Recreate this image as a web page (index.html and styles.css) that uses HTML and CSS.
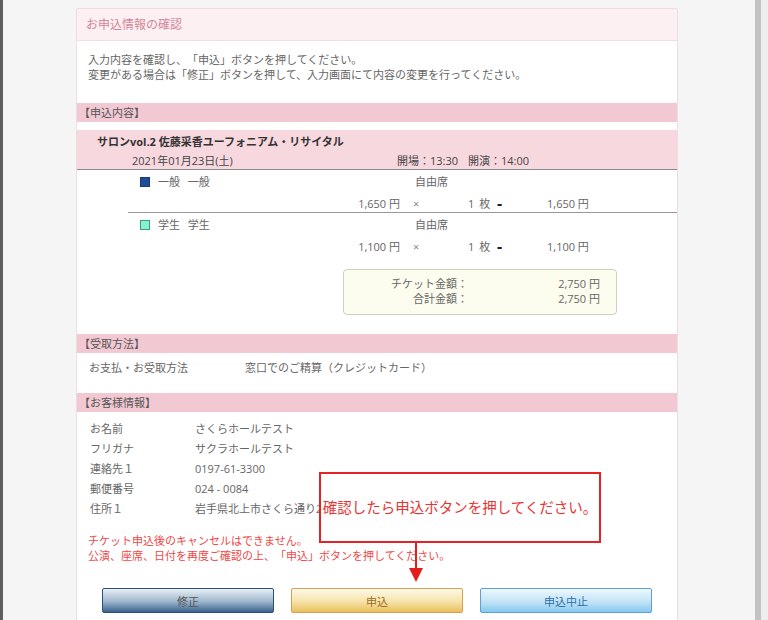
FILE: index.html
```html
<!DOCTYPE html>
<html lang="ja">
<head>
    <meta charset="UTF-8">
    <meta name="viewport" content="width=device-width, initial-scale=1.0">
    <title>お申込情報の確認</title>
    <link rel="stylesheet" href="styles.css">
</head>
<body>

<div class="screen">
    <div class="edge"></div>

    <div class="page">
        <div class="panel">
            <div class="panel-head">お申込情報の確認</div>

            <div class="intro">
                <p>入力内容を確認し、「申込」ボタンを押してください。</p>
                <p>変更がある場合は「修正」ボタンを押して、入力画面にて内容の変更を行ってください。</p>
            </div>

            <!-- 申込内容 -->
            <div class="sec-title">【申込内容】</div>
            <div class="event">
                <div class="event-name">サロンvol.2 佐藤采香ユーフォニアム・リサイタル</div>
                <div class="event-date">
                    <span class="date">2021年01月23日(土)</span>
                    <span class="open">開場：13:30</span>
                    <span>開演：14:00</span>
                </div>
            </div>

            <div class="tickets">
                <div class="ticket">
                    <div class="ticket-type">
                        <span class="type-name"><span class="swatch swatch-blue"></span>一般 一般</span>
                        <span>自由席</span>
                    </div>
                    <div class="ticket-price">
                        <span class="unit">1,650 円</span>
                        <span class="times">×</span>
                        <span class="qty">1 枚</span>
                        <span class="eq">-</span>
                        <span>1,650 円</span>
                    </div>
                </div>
                <div class="ticket">
                    <div class="ticket-type">
                        <span class="type-name"><span class="swatch swatch-green"></span>学生 学生</span>
                        <span>自由席</span>
                    </div>
                    <div class="ticket-price">
                        <span class="unit">1,100 円</span>
                        <span class="times">×</span>
                        <span class="qty">1 枚</span>
                        <span class="eq">-</span>
                        <span>1,100 円</span>
                    </div>
                </div>
            </div>

            <div class="totals">
                <span class="total-label">チケット金額：</span><span class="total-value">2,750 円</span>
                <span class="total-label">合計金額：</span><span class="total-value">2,750 円</span>
            </div>

            <!-- 受取方法 -->
            <div class="sec-title sec-pay">【受取方法】</div>
            <div class="pay-row">
                <span class="pay-label">お支払・お受取方法</span>
                <span>窓口でのご精算（クレジットカード）</span>
            </div>

            <!-- お客様情報 -->
            <div class="sec-title">【お客様情報】</div>
            <dl class="customer">
                <dt>お名前</dt><dd>さくらホールテスト</dd>
                <dt>フリガナ</dt><dd>サクラホールテスト</dd>
                <dt>連絡先１</dt><dd>0197-61-3300</dd>
                <dt>郵便番号</dt><dd>024 - 0084</dd>
                <dt>住所１</dt><dd>岩手県北上市さくら通り2-1</dd>
            </dl>

            <div class="notice">
                <p>チケット申込後のキャンセルはできません。</p>
                <p>公演、座席、日付を再度ご確認の上、「申込」ボタンを押してください。</p>
            </div>

            <div class="buttons">
                <button class="btn btn-back">修正</button>
                <button class="btn btn-apply">申込</button>
                <button class="btn btn-cancel">申込中止</button>
            </div>

            <!-- annotation over the page -->
            <div class="callout">確認したら申込ボタンを押してください。</div>
            <svg class="callout-arrow" width="14" height="39" viewBox="0 0 14 39">
                <line x1="7" y1="0" x2="7" y2="26" stroke="#e41d1d" stroke-width="2"/>
                <polygon points="0,25 14,25 7,39" fill="#e41d1d"/>
            </svg>
        </div>
    </div>

    <div class="scrollbar"></div>
</div>

</body>
</html>
```

FILE: styles.css
```css
html, body {
    margin: 0;
    padding: 0;
}
body {
    font-family: "Open Sans", "Noto Sans CJK JP", sans-serif;
    font-size: 11px;
    color: #666;
    background: #f5f5f5;
    overflow: hidden;
    text-spacing-trim: space-all;
}
p {
    margin: 0;
}
.screen {
    display: flex;
    height: 620px;
}
.edge {
    width: 3px;
    background: #5e5e5e;
}
.page {
    flex: 1;
    padding: 8px 0 0 73px;
}
.scrollbar {
    width: 6px;
    background: #c2c2c2;
    border-right: 7px solid #eeeeee;
}
.panel {
    position: relative;
    width: 600px;
    height: 640px;
    background: #fff;
    border: 1px solid #f1dbe0;
    border-radius: 2px;
}
.panel-head {
    height: 31px;
    line-height: 31px;
    padding-left: 9px;
    font-size: 12px;
    color: #d4879a;
    background: #fcf0f2;
    border-bottom: 1px solid #f2dde1;
}
.intro {
    padding: 11px 11px 21px;
    line-height: 15px;
}
.sec-title {
    height: 19px;
    line-height: 19px;
    padding-left: 2px;
    color: #555;
    background: #f2c9d3;
}
.event {
    margin-top: 8px;
    padding-top: 4px;
    height: 35px;
    background: #f8d8df;
    border-bottom: 1px solid #8a8a8a;
    color: #444;
}
.event-name {
    padding-left: 20px;
    line-height: 16px;
    font-weight: bold;
    color: #333;
}
.event-date {
    display: flex;
    margin-top: 3px;
    padding-left: 55px;
    line-height: 16px;
}
.event-date .date {
    width: 265px;
}
.event-date .open {
    width: 71px;
}
.tickets {
    margin-left: 51px;
}
.ticket + .ticket {
    border-top: 1px solid #9a9a9a;
}
.ticket-type {
    display: grid;
    grid-template-columns: 287px 1fr;
    padding-top: 2px;
    line-height: 20px;
}
.type-name {
    display: flex;
    align-items: center;
    gap: 8px;
    padding-left: 12px;
    word-spacing: 5px;
}
.swatch {
    width: 8px;
    height: 8px;
    border: 1px solid #555;
}
.swatch-blue {
    background: #1f4b98;
    border-color: #1a3a70;
}
.swatch-green {
    background: #86f2cc;
    border-color: #3f9c7e;
}
.ticket-price {
    display: grid;
    grid-template-columns: 272px 68px 29px 50px 1fr;
    margin-top: 3px;
    line-height: 17px;
}
.ticket-price .unit {
    text-align: right;
}
.ticket-price .qty {
    word-spacing: 2px;
}
.ticket-price .times {
    padding-left: 13px;
    color: #888;
}
.ticket-price .eq {
    font-size: 16px;
    font-weight: bold;
    color: #222;
}
.totals {
    display: grid;
    grid-template-columns: 124px 1fr;
    width: 256px;
    margin: 14px 0 0 266px;
    padding: 6px 16px 8px 0;
    line-height: 15px;
    background: #fdfdef;
    border: 1px solid #cfcfc4;
    border-radius: 4px;
}
.total-label {
    text-align: right;
}
.total-value {
    text-align: right;
}
.sec-pay {
    margin-top: 19px;
}
.pay-row {
    display: flex;
    padding: 5px 0 15px 12px;
    line-height: 20px;
}
.pay-label {
    width: 156px;
}
.customer {
    display: grid;
    grid-template-columns: 105px 1fr;
    margin: 0;
    padding: 7px 0 0 13px;
    line-height: 20px;
}
.customer dd {
    margin: 0;
}
.notice {
    margin-top: 14px;
    padding-left: 11px;
    line-height: 15px;
    color: #ef4848;
}
.buttons {
    display: flex;
    justify-content: center;
    gap: 17px;
    margin-top: 25px;
}
.btn {
    width: 172px;
    height: 25px;
    padding: 0;
    font-family: inherit;
    font-size: 11px;
    border-radius: 2px;
    cursor: pointer;
}
.btn-back {
    color: #555;
    background: linear-gradient(#e8eff6, #9db5cc 55%, #3a6390);
    border: 1px solid #2e5075;
}
.btn-apply {
    color: #9a6c2a;
    background: linear-gradient(#fefaea, #f6e3a8 55%, #e9bf5c);
    border: 1px solid #d6a04e;
}
.btn-cancel {
    color: #2e6ea8;
    background: linear-gradient(#eef8fe, #c2e4f7 55%, #86c9ee);
    border: 1px solid #5d9fd6;
}
.callout {
    position: absolute;
    left: 242px;
    top: 463px;
    width: 278px;
    height: 67px;
    border: 2px solid #e42424;
    background: #fff;
    color: #e63434;
    font-size: 14.5px;
    line-height: 67px;
    text-align: center;
    white-space: nowrap;
}
.callout-arrow {
    position: absolute;
    left: 332px;
    top: 534px;
}
```
